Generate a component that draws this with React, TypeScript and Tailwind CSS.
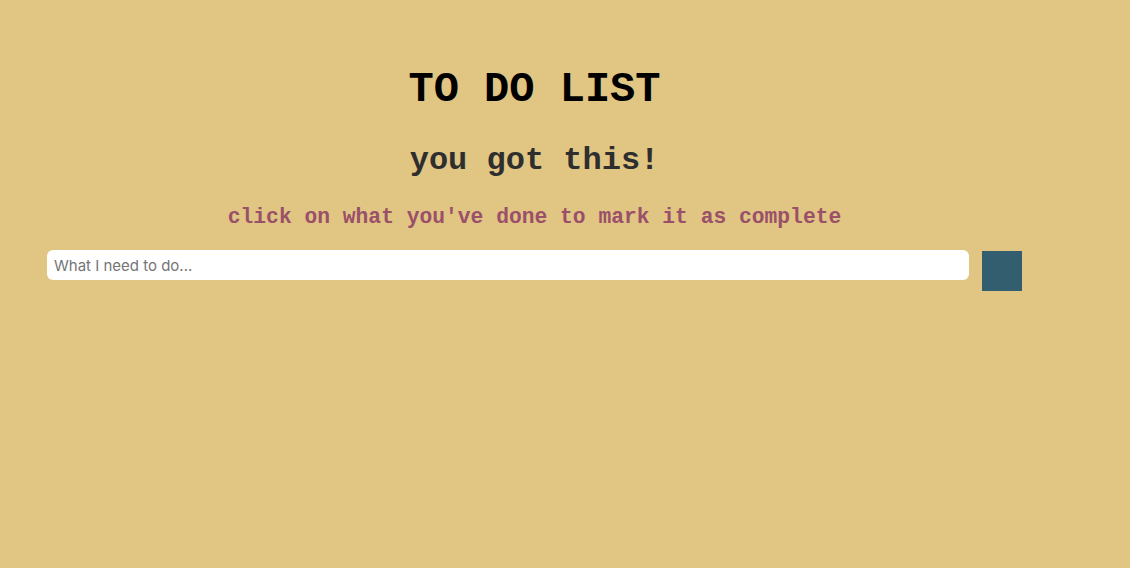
export default function App() {
  return (
    <div className="min-h-[568px] w-full bg-[#e0c583] font-['Liberation_Mono','Courier_New',monospace]">
      <div className="flex w-[1069px] flex-col items-center pl-[47px] pr-[47px] pt-[66px]">
        <h1 className="text-[42px] font-bold leading-[48px] text-black">TO DO LIST</h1>
        <h2 className="mt-[27px] text-[32px] font-bold leading-[40px] text-[#2e2e2e]">you got this!</h2>
        <p className="mt-[22px] text-[21.3px] font-bold leading-[28px] text-[#9b5069]">
          click on what you've done to mark it as complete
        </p>
        <div className="mt-[19px] flex w-full items-start gap-[13px]">
          <input
            type="text"
            placeholder="What I need to do..."
            className="h-[30px] flex-1 rounded-[6px] bg-white px-[7px] font-['Inter',sans-serif] text-[15px] text-black outline-none placeholder:text-[#757575]"
          />
          <button className="mt-[1px] h-[40px] w-[40px] bg-[#335e6f]" />
        </div>
      </div>
    </div>
  );
}
